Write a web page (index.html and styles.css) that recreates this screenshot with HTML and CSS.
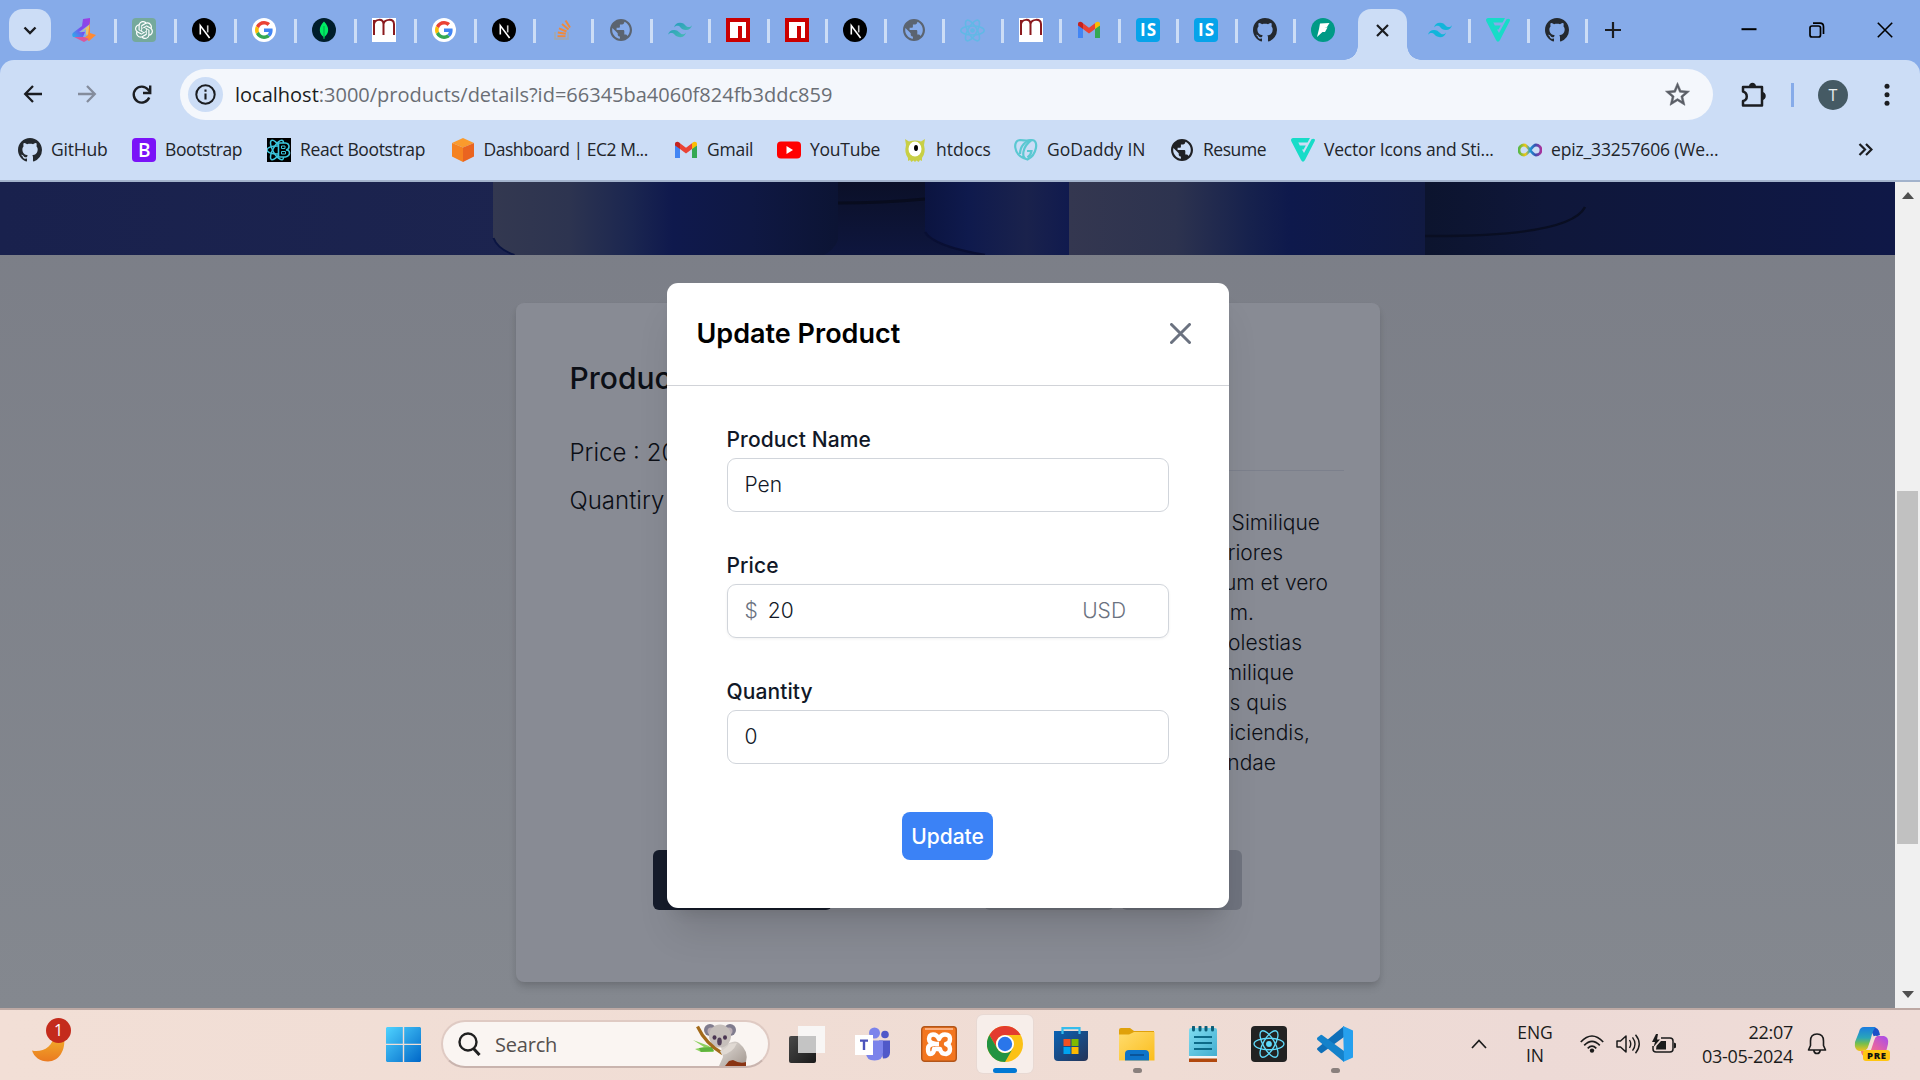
FILE: index.html
```html
<!DOCTYPE html>
<html lang="en">
<head>
<meta charset="utf-8">
<title>Update Product</title>
<link rel="stylesheet" href="styles.css">
</head>
<body>
<svg class="defs" width="0" height="0" aria-hidden="true">
  <defs>
    <linearGradient id="gWin" x1="0" y1="0" x2="1" y2="1"><stop offset="0" stop-color="#4fd3ff"/><stop offset="1" stop-color="#0067c8"/></linearGradient>
    <linearGradient id="gMoon" x1="0" y1="0" x2="0" y2="1"><stop offset="0" stop-color="#f3b52c"/><stop offset="1" stop-color="#ea7a20"/></linearGradient>
    <linearGradient id="gStore" x1="0" y1="0" x2="1" y2="1"><stop offset="0" stop-color="#0a62b4"/><stop offset="1" stop-color="#263457"/></linearGradient>
    <linearGradient id="gFolder" x1="0" y1="0" x2="1" y2="1"><stop offset="0" stop-color="#ffdc6e"/><stop offset="1" stop-color="#fbbd1c"/></linearGradient>
    <linearGradient id="gNote" x1="0" y1="0" x2="1" y2="1"><stop offset="0" stop-color="#7fdcf0"/><stop offset="1" stop-color="#43aed0"/></linearGradient>
    <linearGradient id="gTri" x1="0" y1="1" x2="1" y2="0"><stop offset="0" stop-color="#25b4ea"/><stop offset=".45" stop-color="#7a4cf0"/><stop offset="1" stop-color="#a03fe0"/></linearGradient>
    <linearGradient id="gTw" x1="0" y1="0" x2="1" y2="1"><stop offset="0" stop-color="#2298bd"/><stop offset="1" stop-color="#4cc0b4"/></linearGradient>
    <linearGradient id="gCopA" x1="0" y1="0" x2="0" y2="1"><stop offset="0" stop-color="#1a7be0"/><stop offset=".45" stop-color="#2aa6b8"/><stop offset=".7" stop-color="#79bf4a"/><stop offset="1" stop-color="#f6c21c"/></linearGradient>
    <linearGradient id="gCopB" x1="1" y1="0" x2="0" y2="1"><stop offset="0" stop-color="#a44af0"/><stop offset=".5" stop-color="#e562a4"/><stop offset="1" stop-color="#ff8a5c"/></linearGradient>
    <linearGradient id="gKoala" x1="0" y1="0" x2="1" y2="1"><stop offset="0" stop-color="#e4dfdb"/><stop offset="1" stop-color="#a2978f"/></linearGradient>
    <linearGradient id="gInf" x1="0" y1="0" x2="1" y2="0"><stop offset="0" stop-color="#58b947"/><stop offset=".3" stop-color="#f3c613"/><stop offset=".5" stop-color="#1b9ad6"/><stop offset=".75" stop-color="#3a4fb0"/><stop offset="1" stop-color="#a8329b"/></linearGradient>
    <linearGradient id="gDark" x1="0" y1="0" x2="1" y2="1"><stop offset="0" stop-color="#4a4a4a"/><stop offset="1" stop-color="#1a1a1a"/></linearGradient>
    <symbol id="github" viewBox="0 0 16 16"><path fill="#24292f" d="M8 0C3.58 0 0 3.58 0 8c0 3.54 2.29 6.53 5.47 7.59.4.07.55-.17.55-.38 0-.19-.01-.82-.01-1.49-2.01.37-2.53-.49-2.69-.94-.09-.23-.48-.94-.82-1.13-.28-.15-.68-.52-.01-.53.63-.01 1.08.58 1.23.82.72 1.21 1.87.87 2.33.66.07-.52.28-.87.51-1.07-1.78-.2-3.64-.89-3.64-3.95 0-.87.31-1.59.82-2.15-.08-.2-.36-1.02.08-2.12 0 0 .67-.21 2.2.82.64-.18 1.32-.27 2-.27.68 0 1.36.09 2 .27 1.53-1.04 2.2-.82 2.2-.82.44 1.1.16 1.92.08 2.12.51.56.82 1.27.82 2.15 0 3.07-1.87 3.75-3.65 3.95.29.25.54.73.54 1.48 0 1.07-.01 1.93-.01 2.2 0 .21.15.46.55.38A8.013 8.013 0 0016 8c0-4.42-3.58-8-8-8z"/></symbol>
    <symbol id="next" viewBox="0 0 24 24"><circle cx="12" cy="12" r="12"/><path d="M8.3 16.6V7.6L17.6 20" fill="none" stroke="#fff" stroke-width="1.6"/><path d="M15.7 7.4v7" stroke="#ccc" stroke-width="1.6"/></symbol>
    <symbol id="google" viewBox="0 0 24 24"><circle cx="12" cy="12" r="12" fill="#fff"/><g transform="translate(3 3) scale(.375)"><path fill="#EA4335" d="M24 9.5c3.54 0 6.71 1.22 9.21 3.6l6.85-6.85C35.9 2.38 30.47 0 24 0 14.62 0 6.51 5.38 2.56 13.22l7.98 6.19C12.43 13.72 17.74 9.5 24 9.5z"/><path fill="#4285F4" d="M46.98 24.55c0-1.57-.15-3.09-.38-4.55H24v9.02h12.94c-.58 2.96-2.26 5.48-4.78 7.18l7.73 6c4.51-4.18 7.09-10.36 7.09-17.65z"/><path fill="#FBBC05" d="M10.53 28.59c-.48-1.45-.76-2.99-.76-4.59s.27-3.14.76-4.59l-7.98-6.19C.92 16.46 0 20.12 0 24c0 3.88.92 7.54 2.56 10.78l7.97-6.19z"/><path fill="#34A853" d="M24 48c6.48 0 11.93-2.13 15.89-5.81l-7.73-6c-2.15 1.45-4.92 2.3-8.16 2.3-6.26 0-11.57-4.22-13.47-9.91l-7.98 6.19C6.51 42.62 14.62 48 24 48z"/></g></symbol>
    <symbol id="emm" viewBox="0 0 24 24"><path fill="#fff" d="M0 0h24v24H0z"/><path d="M2 17V2M2 6C3 1 11 0 11.500 6V17M11.500 6C12.500 1 21.500 0 22 6V17" fill="none" stroke="#8b1a1e" stroke-width="2"/></symbol>
    <symbol id="globe" viewBox="2 2 20 20"><path d="M12 2C6.480 2 2 6.480 2 12s4.480 10 10 10 10-4.480 10-10S17.520 2 12 2zm-1 17.930c-3.950-.49-7-3.850-7-7.930 0-.62.08-1.210.21-1.790L9 15v1c0 1.100.9 2 2 2v1.930zm6.900-2.540c-.26-.81-1-1.390-1.900-1.390h-1v-3c0-.55-.45-1-1-1H8v-2h2c.55 0 1-.45 1-1V7h2c1.100 0 2-.9 2-2v-.41c2.930 1.190 5 4.060 5 7.410 0 2.080-.8 3.970-2.100 5.390z"/></symbol>
    <symbol id="tailwind" viewBox="0 0 24 24"><path d="M12.001 4.800c-3.200 0-5.200 1.600-6 4.800 1.200-1.600 2.600-2.200 4.200-1.800.913.228 1.565.89 2.288 1.624C13.666 10.618 15.027 12 18.001 12c3.200 0 5.200-1.600 6-4.800-1.200 1.600-2.600 2.200-4.200 1.800-.913-.228-1.565-.89-2.288-1.624C16.337 6.182 14.976 4.800 12.001 4.800zM6.001 12c-3.200 0-5.200 1.600-6 4.800 1.200-1.600 2.600-2.200 4.200-1.800.913.228 1.565.89 2.288 1.624 1.177 1.194 2.538 2.576 5.512 2.576 3.200 0 5.200-1.600 6-4.800-1.200 1.600-2.600 2.200-4.200 1.800-.913-.228-1.565-.89-2.288-1.624C10.337 13.382 8.976 12 6.001 12z"/></symbol>
    <symbol id="npm" viewBox="0 0 24 24"><path fill="#cb0000" d="M0 0h24v24H0z"/><path fill="#fff" d="M4 4h16v16h-4V8h-4v12H4z"/></symbol>
    <symbol id="reactmark" viewBox="0 0 24 24"><g fill="none" stroke="currentColor"><ellipse cx="12" cy="12" rx="11.200" ry="4.300"/><ellipse cx="12" cy="12" rx="11.200" ry="4.300" transform="rotate(60 12 12)"/><ellipse cx="12" cy="12" rx="11.200" ry="4.300" transform="rotate(120 12 12)"/></g><circle cx="12" cy="12" r="2.200" fill="currentColor"/></symbol>
    <symbol id="gmail" viewBox="0 0 24 24"><path fill="#4285f4" d="M1 20V7l5 3.500V20z"/><path fill="#34a853" d="M18 20V10.500L23 7v13z"/><path fill="#ea4335" d="M6 11V5.200l6 4.600 6-4.600V11l-6 4.500z"/><path fill="#c5221f" d="M1 7.500V6c0-2.600 2.900-3 4.300-1.400L6 5.200V11z"/><path fill="#fbbc04" d="M23 7.500V6c0-2.600-2.900-3-4.300-1.400l-.7.600V11z"/></symbol>
    <symbol id="is" viewBox="0 0 24 24"><rect width="24" height="24" rx="4" fill="#06a3ea"/><text x="12" y="18" text-anchor="middle" font-family="Open Sans,sans-serif" font-weight="700" font-size="17" fill="#fff" textLength="16">IS</text></symbol>
    <symbol id="flaticon" viewBox="0 0 24 24"><path fill="#17dcc8" d="M1.800 0H19L16.500 4.500H7.300L8.800 7.500H14.800L12.600 11.500H11L13 15 20.500 1.200Q22.500 0 24 1.500 24 2.500 23.500 3.500L14 22Q12 25.500 10 22L.3 3.200Q-.7 .5 1.800 0z"/></symbol>
  </defs>
</svg>

<header class="browser">
  <div class="tabstrip">
    <button class="tab-search" aria-label="Search tabs"><svg width="14" height="9" viewBox="0 0 14 9"><path d="M1.500 1.500 7 7l5.500-5.500" fill="none" stroke="#1b1d21" stroke-width="2.400"/></svg></button>
    <div class="tabs">
      <div class="tab wide"><svg width="24" height="24" viewBox="0 0 24 24"><path fill="url(#gTri)" d="M11 1 18 0V6L7 14h6l-2 5H1q-2-3 1-5l8-6z"/><path fill="#e9c46a" d="M17 7v9l-3 1v-6l-6 4z"/><path fill="#ff8a32" d="M18 3v12l6 2-7 6-5-3 4-3z"/><path fill="#d9579f" d="M2 19l10 0 5 2-5 3z"/></svg></div>
      <div class="tab wide"><svg width="24" height="24" viewBox="0 0 24 24"><rect width="24" height="24" rx="4" fill="#75a99c"/><path transform="translate(3 3) scale(.75)" fill="#fff" d="M22.282 9.821a5.985 5.985 0 0 0-.516-4.911 6.046 6.046 0 0 0-6.510-2.900A6.065 6.065 0 0 0 4.981 4.182a5.985 5.985 0 0 0-3.998 2.900 6.046 6.046 0 0 0 .743 7.097 5.980 5.980 0 0 0 .511 4.911 6.051 6.051 0 0 0 6.515 2.900A5.985 5.985 0 0 0 13.260 24a6.056 6.056 0 0 0 5.772-4.206 5.989 5.989 0 0 0 3.998-2.900 6.056 6.056 0 0 0-.748-7.073zm-9.022 12.608a4.476 4.476 0 0 1-2.876-1.041l.142-.080 4.778-2.758a.795.795 0 0 0 .393-.681v-6.737l2.020 1.169a.071.071 0 0 1 .038.052v5.583a4.504 4.504 0 0 1-4.495 4.494zm-9.661-4.125a4.471 4.471 0 0 1-.535-3.014l.142.085 4.783 2.758a.771.771 0 0 0 .781 0l5.843-3.369v2.332a.080.080 0 0 1-.033.062L9.740 19.950a4.499 4.499 0 0 1-6.141-1.646zM2.341 7.896a4.485 4.485 0 0 1 2.366-1.973V11.600a.766.766 0 0 0 .388.677l5.814 3.354-2.020 1.169a.076.076 0 0 1-.071 0l-4.830-2.787A4.504 4.504 0 0 1 2.341 7.872zm16.596 3.856L13.104 8.364 15.119 7.200a.076.076 0 0 1 .071 0l4.830 2.791a4.494 4.494 0 0 1-.677 8.104v-5.677a.790.790 0 0 0-.407-.667zm2.011-3.023l-.142-.085-4.774-2.782a.776.776 0 0 0-.785 0L9.409 9.230V6.897a.066.066 0 0 1 .028-.062l4.830-2.787a4.499 4.499 0 0 1 6.680 4.660zM8.307 12.863l-2.020-1.164a.080.080 0 0 1-.038-.057V6.074a4.499 4.499 0 0 1 7.376-3.454l-.142.081L8.704 5.459a.795.795 0 0 0-.393.681zm1.098-2.365l2.602-1.500 2.607 1.500v2.999l-2.597 1.500-2.607-1.500z"/></svg></div>
      <div class="tab wide"><svg width="24" height="24"><use href="#next"/></svg></div>
      <div class="tab wide"><svg width="24" height="24"><use href="#google"/></svg></div>
      <div class="tab wide"><svg width="24" height="24" viewBox="0 0 24 24"><circle cx="12" cy="12" r="12" fill="#001e2b"/><path fill="#00ed64" d="M12 3.500c6 6 5 12 .4 15.500V21h-.8v-2C7 15.500 6 9.500 12 3.500z"/><path d="M12 8v12" stroke="#00a54a"/></svg></div>
      <div class="tab wide"><svg width="24" height="24"><use href="#emm"/></svg></div>
      <div class="tab wide"><svg width="24" height="24"><use href="#google"/></svg></div>
      <div class="tab"><svg width="24" height="24"><use href="#next"/></svg></div>
      <div class="tab"><svg width="20" height="22" viewBox="0 0 20 22"><path d="M2 13v7h13v-7" fill="none" stroke="#a3a8ad" stroke-width="1.600"/><path d="M4.500 17.300h8M4.800 13.500l8 1.200M6 9.300l7.500 3.200M9 5l6.500 5.500M12.500 1.500l4.500 7" stroke="#ef8a3c" stroke-width="2"/></svg></div>
      <div class="tab"><svg class="globe-grey" width="22" height="22"><use href="#globe"/></svg></div>
      <div class="tab"><svg width="24" height="24" fill="url(#gTw)"><use href="#tailwind"/></svg></div>
      <div class="tab"><svg width="24" height="24"><use href="#npm"/></svg></div>
      <div class="tab"><svg width="24" height="24"><use href="#npm"/></svg></div>
      <div class="tab"><svg width="24" height="24"><use href="#next"/></svg></div>
      <div class="tab"><svg class="globe-grey" width="22" height="22"><use href="#globe"/></svg></div>
      <div class="tab"><svg class="react-soft" width="25" height="25"><use href="#reactmark"/></svg></div>
      <div class="tab"><svg width="24" height="24"><use href="#emm"/></svg></div>
      <div class="tab"><svg width="24" height="24"><use href="#gmail"/></svg></div>
      <div class="tab"><svg width="24" height="24"><use href="#is"/></svg></div>
      <div class="tab"><svg width="24" height="24"><use href="#is"/></svg></div>
      <div class="tab"><svg width="24" height="24"><use href="#github"/></svg></div>
      <div class="tab plain"><svg width="24" height="24" viewBox="0 0 24 24"><circle cx="12" cy="12" r="12" fill="#009a86"/><path fill="#fff" d="M9 5.500 18.500 5 16 9h-2.500l3 .5-2.500 4.500h-2.500L6 19l2-8z"/></svg></div>
      <div class="tab active"><svg width="13" height="13" viewBox="0 0 13 13"><path d="M1 1l11 11M12 1 1 12" stroke="#1b1d21" stroke-width="2.200"/></svg></div>
      <div class="tab"><svg width="24" height="24" fill="#12b5da"><use href="#tailwind"/></svg></div>
      <div class="tab"><svg width="24" height="24"><use href="#flaticon"/></svg></div>
      <div class="tab"><svg width="24" height="24"><use href="#github"/></svg></div>
    </div>
    <button class="new-tab" aria-label="New tab"><svg width="16" height="16" viewBox="0 0 16 16"><path d="M8 0v16M0 8h16" stroke="#1b1d21" stroke-width="2.200"/></svg></button>
    <div class="window-controls">
      <svg width="16" height="16" viewBox="0 0 16 16"><path d="M.5 7.200h15" stroke="#000" stroke-width="2"/></svg>
      <svg width="16" height="16" viewBox="0 0 16 16"><rect x="1" y="4" width="10.500" height="11" rx="2" fill="none" stroke="#000" stroke-width="1.700"/><path d="M4 1.200h7q3.500 0 3.500 3.500V12" fill="none" stroke="#000" stroke-width="1.700"/></svg>
      <svg width="16" height="16" viewBox="0 0 16 16"><path d="M.8.8l14.400 14.400M15.200.8.8 15.200" stroke="#000" stroke-width="1.600"/></svg>
    </div>
  </div>

  <div class="toolbar">
    <div class="nav">
      <svg width="20" height="20" viewBox="0 0 20 20"><path d="M19 10H2.500M10 2 2.200 10 10 18" fill="none" stroke="#1b1d21" stroke-width="2.300"/></svg>
      <svg width="20" height="20" viewBox="0 0 20 20"><path d="M1 10h16.500M10 2l7.800 8L10 18" fill="none" stroke="#848c9c" stroke-width="2.300"/></svg>
      <svg width="22" height="22" viewBox="0 0 22 22"><path d="M18.200 13.500A8 8 0 1 1 17 5.600L19 8" fill="none" stroke="#1b1d21" stroke-width="2.400"/><path d="M19.200 1.500V9H12" fill="none" stroke="#1b1d21" stroke-width="2.400"/></svg>
    </div>
    <div class="omnibox">
      <span class="site-info"><svg width="21" height="21" viewBox="0 0 21 21"><circle cx="10.500" cy="10.500" r="9.200" fill="none" stroke="#1b1d21" stroke-width="2"/><path d="M10.500 9.500v6M10.500 5.500v2.200" stroke="#1b1d21" stroke-width="2.100"/></svg></span>
      <span class="url"><b>localhost</b>:3000/products/details?id=66345ba4060f824fb3ddc859</span>
      <svg class="star" width="29" height="29" viewBox="0 0 24 24"><path fill="#5a5e66" stroke="#5a5e66" stroke-width=".4" d="M22 9.240l-7.190-.62L12 2 9.190 8.630 2 9.240l5.460 4.730L5.820 21 12 17.270 18.180 21l-1.630-7.030L22 9.240zM12 15.400l-3.760 2.270 1-4.280-3.320-2.880 4.380-.38L12 6.100l1.710 4.040 4.380.38-3.320 2.880 1 4.280L12 15.400z"/></svg>
    </div>
    <div class="actions">
      <svg width="26" height="26" viewBox="0 0 26 26"><path d="M3 5h19v18.500H3V19c5-1 5-8 0-9.500z" fill="none" stroke="#1b1d21" stroke-width="2.500" stroke-linejoin="round"/><path fill="#1b1d21" d="M9 4.500c0-5 7-5 7 0zM22 10c5 0 5 8 0 8z"/></svg>
      <i class="divider"></i>
      <span class="avatar">T</span>
      <svg class="kebab" width="6" height="24" viewBox="0 0 6 24"><g fill="#1b1d21"><circle cx="3" cy="3.200" r="2.500"/><circle cx="3" cy="11.700" r="2.500"/><circle cx="3" cy="20.200" r="2.500"/></g></svg>
    </div>
  </div>

  <nav class="bookmarks">
    <a class="bm b1"><svg width="24" height="24"><use href="#github"/></svg><span>GitHub</span></a>
    <a class="bm b2"><svg width="24" height="24" viewBox="0 0 24 24"><rect width="24" height="24" rx="4" fill="#7a12f8"/><text x="12" y="18.500" text-anchor="middle" font-family="Open Sans,sans-serif" font-weight="600" font-size="19" fill="#fff">B</text></svg><span>Bootstrap</span></a>
    <a class="bm b3"><svg width="24" height="24" viewBox="0 0 24 24"><path d="M0 0h24v24H0z"/><g fill="none" stroke="#3cc6dc" stroke-width="1.500"><ellipse cx="10" cy="12" rx="10" ry="4"/><ellipse cx="10" cy="12" rx="11" ry="4" transform="rotate(60 10 12)"/><ellipse cx="10" cy="12" rx="11" ry="4" transform="rotate(120 10 12)"/></g><path d="M11.500 5v14h7q4-1 4-4t-3.500-3q3-.5 3-3.500T18.500 5z" fill="#000" stroke="#3cc6dc" stroke-width="1.600"/><path d="M14.500 8h3.500v2.500h-3.500zM14.500 13.500h4V16h-4z" fill="none" stroke="#3cc6dc"/></svg><span>React Bootstrap</span></a>
    <a class="bm b4"><svg width="24" height="24" viewBox="0 0 24 24"><path fill="#fa9a2c" d="M12 0 23 5 12 9.500 1 5z"/><path fill="#f58220" d="M1 5l11 4.500V24L1 18.500z"/><path fill="#ea6420" d="M23 5 12 9.500V24l11-5.500z"/></svg><span>Dashboard | EC2 M...</span></a>
    <a class="bm b5"><svg width="24" height="24"><use href="#gmail"/></svg><span>Gmail</span></a>
    <a class="bm b6"><svg width="24" height="24" viewBox="0 0 24 24"><rect y="3.500" width="24" height="17" rx="4" fill="#f00"/><path fill="#fff" d="M9.500 8v8l6.500-4z"/></svg><span>YouTube</span></a>
    <a class="bm b7"><svg width="24" height="24" viewBox="0 0 24 24"><path fill="#c8cf45" d="M2 1l4 2.500q6-2 12 0L22 1l-1 6q2 8-2 13v3l-2-1-1.500 2-2-1.500L12 24l-1.500-1.500-2 1.500L7 22l-2 1v-3Q1 15 3 7z"/><ellipse cx="12" cy="11" rx="6.500" ry="7.500" fill="#fff"/><ellipse cx="13" cy="10" rx="2" ry="3"/></svg><span>htdocs</span></a>
    <a class="bm b8"><svg width="24" height="24" viewBox="0 0 24 24"><g fill="none" stroke="#5bc8d2" stroke-width="2.200"><path d="M10.500 20.500C-1 16-1 2 6 2q7 1 12 0c7 0 5 15-4.500 19.500-7-1.500-5-13 4-19.500"/><path d="M6 16C6 8 12 2 18 2M13 13h4.500q-.5 4-4 6.500"/></g></svg><span>GoDaddy IN</span></a>
    <a class="bm b9"><svg width="22" height="22" fill="#202124"><use href="#globe"/></svg><span>Resume</span></a>
    <a class="bm b10"><svg width="24" height="24"><use href="#flaticon"/></svg><span>Vector Icons and Sti...</span></a>
    <a class="bm b11"><svg width="24" height="24" viewBox="0 0 24 24"><path d="M12 12C9 8 8 7 6 7a4.800 4.800 0 0 0 0 10c2 0 3-1 6-5s4-5 6-5a4.800 4.800 0 0 1 0 10c-2 0-3-1-6-5z" fill="none" stroke="url(#gInf)" stroke-width="2.800"/></svg><span>epiz_33257606 (We...</span></a>
    <svg class="more" width="15" height="13" viewBox="0 0 15 13"><path d="M1.500 1 7 6.500 1.500 12M8 1l5.500 5.500L8 12" fill="none" stroke="#1b1d21" stroke-width="2.200"/></svg>
  </nav>
</header>

<div class="viewport">
  <main class="page">
    <div class="hero">
      <svg width="1895" height="73" viewBox="0 0 1895 73">
        <defs>
          <linearGradient id="h0"><stop offset="0" stop-color="#19214d"/><stop offset="1" stop-color="#1c244f"/></linearGradient>
          <linearGradient id="h1"><stop offset="0" stop-color="#333850"/><stop offset=".22" stop-color="#2d3450"/><stop offset=".4" stop-color="#1b2650"/><stop offset=".52" stop-color="#0f194d"/><stop offset=".75" stop-color="#0f1843"/><stop offset="1" stop-color="#0c1434"/></linearGradient>
          <linearGradient id="h2"><stop offset="0" stop-color="#0b1440"/><stop offset=".3" stop-color="#0f1a4d"/><stop offset=".7" stop-color="#1a224c"/><stop offset="1" stop-color="#101a4e"/></linearGradient>
          <linearGradient id="h3"><stop offset="0" stop-color="#343750"/><stop offset=".3" stop-color="#2d334f"/><stop offset=".5" stop-color="#17224d"/><stop offset=".62" stop-color="#0e194c"/><stop offset="1" stop-color="#111a42"/></linearGradient>
          <linearGradient id="h4"><stop offset="0" stop-color="#0c142e"/><stop offset=".25" stop-color="#0f173a"/><stop offset="1" stop-color="#0f1847"/></linearGradient>
          <linearGradient id="h5" x1="0" y1="0" x2="0" y2="1"><stop offset="0" stop-color="#0b1028"/><stop offset="1" stop-color="#0e163e"/></linearGradient>
        </defs>
        <path fill="url(#h0)" d="M0 0h530v73H0z"/>
        <path fill="url(#h5)" d="M800 0h200v73H800z"/>
        <path d="M838 21q45 0 87-4" fill="none" stroke="#080c1e" stroke-width="3"/>
        <path fill="url(#h1)" d="M493 0h345v58q-4 10-14 15H515Q497 67 493 56z"/>
        <path d="M493.500 56q4 11 21 17" fill="none" stroke="#0b1542" stroke-width="2"/>
        <path fill="url(#h2)" d="M925 0h145v73h-85Q935 65 925 52z"/>
        <path d="M925 50q8 14 60 23" fill="none" stroke="#090f33" stroke-width="2.500"/>
        <path fill="url(#h3)" d="M1069 0h357v73h-357z"/>
        <path fill="url(#h4)" d="M1425 0h470v73h-470z"/>
        <path d="M1425 54q145 1 160-29" fill="none" stroke="#090e22" stroke-width="2.500"/>
      </svg>
    </div>
    <section class="card">
      <div class="summary">
        <h1>Product</h1>
        <p>Price : 20</p>
        <p>Quantiry</p>
      </div>
      <div class="details">
        <hr>
        <div class="description">
          <span>Similique</span><span>asperiores</span><span>harum et vero</span><span>enim.</span><span>molestias</span><span>similique</span><span>facilis quis</span><span>reiciendis,</span><span>repellendae</span>
        </div>
      </div>
      <div class="buttons"><i class="btn dark"></i><i class="btn soft first"></i><i class="btn grey"></i></div>
    </section>
  </main>
  <div class="scrollbar">
    <svg width="12" height="8" viewBox="0 0 12 8"><path fill="#505050" d="M0 8h12L6 1z"/></svg>
    <i class="thumb"></i>
    <svg width="12" height="8" viewBox="0 0 12 8"><path fill="#505050" d="M0 0h12L6 7z"/></svg>
  </div>
  <div class="modal">
    <div class="modal-head">
      <h2>Update Product</h2>
      <svg width="21" height="21" viewBox="0 0 21 21"><path d="M1.500 1.500l18 18M19.500 1.500l-18 18" stroke="#6b7280" stroke-width="3" stroke-linecap="round"/></svg>
    </div>
    <div class="modal-body">
      <label>Product Name</label>
      <div class="field">Pen</div>
      <label>Price</label>
      <div class="field shadow"><em>$</em>20<em class="unit">USD</em></div>
      <label>Quantity</label>
      <div class="field">0</div>
      <button class="update">Update</button>
    </div>
  </div>
</div>

<footer class="taskbar">
  <div class="weather">
    <svg width="36" height="38" viewBox="0 0 36 38"><path fill="url(#gMoon)" d="M1 25.500c9 2.500 22-3 22-17L33 12c2 13-5 24.500-16 24.500C9 36.500 3 32 1 25.500z"/></svg>
    <span class="badge">1</span>
  </div>
  <svg class="start" width="35" height="35" viewBox="0 0 35 35"><path fill="url(#gWin)" d="M1 0h15.800v16.700H0V1zM18.200 0H34l1 1v15.700H18.200zM0 18.100h16.800V35H1l-1-1zM18.200 18.100H35V34l-1 1H18.200z"/></svg>
  <div class="search">
    <svg width="23" height="24" viewBox="0 0 23 24"><circle cx="10" cy="10" r="8.500" fill="none" stroke="#1f1f1f" stroke-width="2.400"/><path d="M15.500 16.500l6 6.500" stroke="#1f1f1f" stroke-width="3"/></svg>
    <span>Search</span>
    <svg class="koala" width="56" height="43" viewBox="0 0 56 43"><path fill="#8ed160" d="M0 17l16 6 5 6-13 0-6-3 9-2z"/><path fill="#5eb33f" d="M6 25l13-1 2 4-13 1z"/><path fill="#8a3413" d="M28 43q5-8 14-7l11 1v6z"/><path fill="url(#gKoala)" d="M28 24q4-3 8-4 7-3 10 0 10 8 7 19-6 2-13-2l-4 1-4 5h-6l4-9z"/><circle cx="17" cy="7" r="6" fill="#807c8e"/><circle cx="37" cy="7" r="6" fill="#807c8e"/><circle cx="18" cy="8" r="3.500" fill="#bbaeb6"/><circle cx="36" cy="8" r="3.500" fill="#bbaeb6"/><ellipse cx="27" cy="13" rx="11" ry="11.500" fill="#c6bfbb"/><ellipse cx="21.500" cy="14.500" rx="2" ry="2.300" fill="#4b3652"/><ellipse cx="32" cy="14.500" rx="2" ry="2.300" fill="#4b3652"/><ellipse cx="26.500" cy="18.500" rx="2.300" ry="4" fill="#53405a"/><path d="M4.500 3.500q8 17 25 27" fill="none" stroke="#a36a1b" stroke-width="3.200"/><path fill="#e0d9d3" d="M44 20q-4 10-15 12l-2-4q7-3 9-7z"/></svg>
  </div>
  <div class="pinned">
    <span class="pin"><svg width="36" height="40" viewBox="0 0 36 40"><rect y="12" width="27" height="27" rx="2" fill="url(#gDark)"/><path fill="#f8f8f8" d="M9 2h27v27H9z" opacity=".9"/><path fill="#c4c4c4" d="M9 12h18v17H9z"/></svg></span>
    <span class="pin"><svg width="36" height="34" viewBox="0 0 36 34"><circle cx="19.500" cy="6" r="5.500" fill="#7b83eb"/><circle cx="30" cy="7.500" r="3.800" fill="#5059c9"/><path fill="#5059c9" d="M24 13.500h11v12q0 6-7 6z"/><path fill="#7b83eb" d="M11 13.500h17v12q0 8-8.500 8T11 25.500z"/><path fill="#fff" d="M0 8h18v20H0z"/><path fill="#4b53bc" d="M5 12.500h8v2.300H10.200V23H7.800v-8.200H5z"/></svg></span>
    <span class="pin"><svg width="36" height="36" viewBox="0 0 36 36"><rect x=".7" y=".7" width="34.600" height="34.600" rx="3" fill="#f3761f" stroke="#b3561a" stroke-width="1.400"/><path fill="#fcae7c" d="M4 2h28v2H4z"/><path d="M18 18h-3q-7-1-7-5 0-4.500 4-4.500t6 4.500q2-4.500 6-4.500 5 0 5 4.500t-4 5q4 1 4 5t-4 5q-5 0-6-5h-6q0 5-4 5-2 0-2-5 0-5 6-5" fill="none" stroke="#fff" stroke-width="4.400" stroke-linejoin="round"/></svg></span>
    <span class="pin current"><svg width="36" height="36" viewBox="0 0 36 36"><circle cx="18" cy="18" r="18" fill="#fbc116"/><path fill="#e33b2e" d="M2.400 9A18 18 0 0 1 33.600 9H18a9 9 0 0 0-7.800 13.500z"/><path fill="#229342" d="M2.400 9A18 18 0 0 0 18 36l7.800-13.500a9 9 0 0 1-15.600 0z"/><circle cx="18" cy="18" r="9" fill="#fff"/><circle cx="18" cy="18" r="7.200" fill="#2a76ea"/></svg></span>
    <span class="pin"><svg width="36" height="36" viewBox="0 0 36 36"><path d="M9.500 8V2.200h17V8" fill="none" stroke="#35bcec" stroke-width="2.200"/><path fill="url(#gStore)" d="M1 5h34v26q0 4-4 4H5q-4 0-4-4z"/><path d="M9.500 5v3M26.500 5v3" stroke="#35bcec" stroke-width="2.200"/><path fill="#f25022" d="M10.500 13h7v7h-7z"/><path fill="#7fba00" d="M18.500 13h7v7h-7z"/><path fill="#00a4ef" d="M10.500 21h7v7h-7z"/><path fill="#ffb900" d="M18.500 21h7v7h-7z"/></svg></span>
    <span class="pin open"><svg width="36" height="36" viewBox="0 0 36 36"><path fill="#e0a10a" d="M0 4q0-2 2-2h9l4 3h20v5H0z"/><path fill="url(#gFolder)" d="M0 8.500h10L15 6h20.500v28.500H0z"/><path fill="#0e74c9" d="M6 34.500V28q0-4 4-4h16q4 0 4 4v6.500z"/><path d="M11 29h14" stroke="#0a4a8a" stroke-width="1.500"/></svg></span>
    <span class="pin"><svg width="28" height="36" viewBox="0 0 28 36"><path fill="#b1480d" d="M0 32h28v4H0z"/><path fill="#f4f4f4" d="M0 29h28v3.500H0z"/><path fill="url(#gNote)" d="M0 4q0-2 2-2h24q2 0 2 2v26H0z"/><path d="M4.500 1v3M11 1v3M17 1v3M23.500 1v3" stroke="#0c5e78" stroke-width="3" stroke-linecap="round"/><path d="M5 11h18M5 17h18M5 23h18" stroke="#0c6a88" stroke-width="2"/></svg></span>
    <span class="pin"><span class="react-tile"><svg width="32" height="32"><use href="#reactmark"/></svg></span></span>
    <span class="pin open"><svg width="36" height="36" viewBox="0 0 36 36"><path fill="#0f6fb8" d="M27 0v11L5 27l-1 .3L.5 24q-1-1 0-2z"/><path fill="#1482cb" d="M.5 11.500Q-.5 12.500.5 14L27 36V25L5 9l-1-.3z"/><path fill="#26a0ee" d="M26 0l10 4.500v27L26 36l1-2z"/></svg></span>
  </div>
  <div class="tray">
    <svg class="chev" width="16" height="10" viewBox="0 0 16 10"><path d="M1 9l7-7.500L15 9" fill="none" stroke="#1b1b1b" stroke-width="1.700"/></svg>
    <div class="lang">ENG<br>IN</div>
    <svg width="24" height="18" viewBox="0 0 24 18"><g fill="none" stroke="#1b1b1b" stroke-width="1.700"><path d="M.8 7Q12-5 23.200 7M4.200 10.300q7.800-8 15.600 0M7.700 13.300q4.300-4.300 8.600 0"/></g><circle cx="12" cy="15.600" r="2.200" fill="#1b1b1b"/></svg>
    <svg width="24" height="20" viewBox="0 0 24 20"><path d="M1 7h3.500L10 2v16l-5.500-5H1z" fill="none" stroke="#1b1b1b" stroke-width="1.500" stroke-linejoin="round"/><path d="M13.500 6q2.500 4 0 8M16.500 3.300q5 6.700 0 13.400M19.500.8q7.500 9.200 0 18.400" fill="none" stroke="#1b1b1b" stroke-width="1.400"/></svg>
    <svg width="24" height="20" viewBox="0 0 24 20"><path d="M9 4h9q3 0 3 3v8q0 3-3 3H4q-3 0-3-3v-3" fill="none" stroke="#1b1b1b" stroke-width="1.500"/><path fill="#1b1b1b" d="M22 8.500l2 1v4l-2 1zM4.500 12 9 7h5v8.500H4zM4 0 0 8h3L1.500 13 8 5.500H5L6 0z"/></svg>
    <div class="clock">22:07<br>03-05-2024</div>
    <svg class="bell" width="20" height="22" viewBox="0 0 20 22"><path d="M10 1q6.500 0 6.500 7v4.500l2 4.500h-17l2-4.500V8q0-7 6.500-7zM6.800 17.500q.5 3 3.200 3t3.200-3" fill="none" stroke="#1b1b1b" stroke-width="1.600" stroke-linejoin="round"/></svg>
    <svg width="36" height="36" viewBox="0 0 36 36"><path fill="#1b50c8" d="M16 2h6q3 1 4 7l-6 2z"/><path fill="url(#gCopA)" d="M10 1h12q-3 2-5 11l-3 9q-1 4-6 4H5Q0 24 1 16L5 6Q6 1 10 1z"/><path fill="url(#gCopB)" d="M23 10h7q5 1 4 8l-2 8q-1 5-6 5H12q-5-1-5-6h6q3 0 4-4l3-8q1-3 3-3z"/><path fill="#f4dfd6" d="M18 12q2-3 5-2-2 1-3 5l-3 9h-5q2-1 3-4z"/><rect x="9" y="24" width="27" height="11" rx="3" fill="#ffc610"/><text x="22.500" y="33" text-anchor="middle" font-family="Open Sans,sans-serif" font-weight="800" font-size="9.500" textLength="19" fill="#111">PRE</text></svg>
  </div>
</footer>
</body>
</html>
```
FILE: styles.css
```css
* { box-sizing: border-box; }
body { margin: 0; width: 1920px; height: 1080px; overflow: hidden; display: flex; flex-direction: column; font-family: "Inter", sans-serif; }
button { border: 0; padding: 0; font: inherit; }
svg { display: block; flex: none; }
.defs { position: absolute; }

/* browser chrome */
.browser { height: 182px; background: #86abe9; font-family: "Open Sans", sans-serif; flex: none; }
.tabstrip { height: 60px; display: flex; align-items: center; padding-left: 9px; }
.tab-search { width: 42px; height: 42px; border-radius: 14px; background: #ccddf6; display: grid; place-items: center; margin-right: 6px; }
.tabs { display: flex; height: 60px; }
.tab { width: 58.5px; display: flex; align-items: center; justify-content: center; padding-right: 4px; background: linear-gradient(#ccddf6, #ccddf6) right 0 top 19px / 3px 24px no-repeat; }
.tab.wide { width: 60px; padding-right: 6px; }
.tab.plain { background: none; }
.tab.active { background: #ccddf6; border-radius: 13px 13px 0 0; height: 51px; width: 49px; margin: 9px 6px 0 3px; padding: 0 0 9px; position: relative; }
.tab.active::before, .tab.active::after { content: ""; position: absolute; bottom: 0; width: 14px; height: 14px; }
.tab.active::before { right: 100%; background: radial-gradient(circle at 0 0, transparent 13.5px, #ccddf6 14px); }
.tab.active::after { left: 100%; background: radial-gradient(circle at 100% 0, transparent 13.5px, #ccddf6 14px); }
.globe-grey { fill: #5b6470; }
.react-soft { color: #62b8e6; stroke-width: 1.5; }
.new-tab { background: none; margin-left: 17px; }
.window-controls { display: flex; gap: 52px; margin-left: auto; padding-right: 27px; }
.toolbar { height: 60px; background: #ccddf6; border-radius: 14px 14px 0 0; display: flex; align-items: center; padding: 9px 0 0 23px; }
.nav { display: flex; gap: 34px; width: 157px; }
.omnibox { width: 1533px; height: 51px; border-radius: 26px; background: #f4f7fc; display: flex; align-items: center; padding: 0 21px 0 8px; }
.site-info { width: 35px; height: 35px; border-radius: 50%; background: #ccddf6; display: grid; place-items: center; margin-right: 12px; }
.url { font-size: 20px; color: #6a6e75; flex: 1; white-space: nowrap; }
.url b { font-weight: 400; color: #1b1d21; }
.actions { display: flex; align-items: center; padding-left: 27px; }
.divider { width: 3px; height: 24px; background: #86abe9; margin: 0 24px 0 25px; }
.avatar { width: 30px; height: 30px; border-radius: 50%; background: #455a64; color: #e8eef0; display: grid; place-items: center; font-size: 16px; margin-right: 36px; }
.bookmarks { height: 62px; background: #ccddf6; border-bottom: 2px solid #a3b3cc; display: grid; grid-template-columns: 114px 135px 183.5px 223.5px 103px 126px 111px 156px 121px 227px 340px 1fr; align-items: center; padding: 0 0 1px 18px; }
.bm { display: flex; align-items: center; gap: 9px; font-size: 17.5px; color: #22252a; white-space: nowrap; }
.bm span { margin-top: -1px; }
.b1 { letter-spacing: -.2px; }
.b2 { letter-spacing: -.4px; }
.b3 { letter-spacing: -.35px; }
.b4 { letter-spacing: -.48px; }
.b5, .b6 { letter-spacing: -.25px; }
.b9 { letter-spacing: -.45px; }
.b9 svg { margin: 0 1px; }
.b10 { letter-spacing: -.2px; }
.b11 { letter-spacing: -.15px; }

/* product page */
.viewport { flex: none; height: 826px; display: flex; position: relative; }
.page { width: 1895px; background: linear-gradient(#7b7e87, #84888f); overflow: hidden; }
.hero { height: 73px; }
.card { margin: 48px 0 0 516px; width: 864px; height: 679px; border-radius: 8px; background: #888b94; box-shadow: 0 6px 9px -1px rgba(0,0,0,.12), 0 3px 6px -2px rgba(0,0,0,.1); display: grid; grid-template: 547px 1fr / 1fr 1fr; color: #0c0f16; }
.summary { padding: 53px 0 0 53.5px; }
.summary h1 { margin: 0 0 28px; font-weight: 450; font-size: 30px; line-height: 45px; }
.summary p { margin: 0; font-size: 24px; line-height: 48px; font-weight: 350; }
.details { padding: 167px 36px 0 0; }
.details hr { border: 0; border-top: 1.5px solid #7c808c; margin: 0; }
.description { display: flex; flex-direction: column; margin: 37px 0 0 152px; font-size: 21px; line-height: 30px; text-align: right; font-weight: 350; white-space: nowrap; }
.description span:nth-child(1) { width: 220px; }
.description span:nth-child(2) { width: 183px; }
.description span:nth-child(3) { width: 228px; }
.description span:nth-child(4) { width: 154px; }
.description span:nth-child(5) { width: 202px; }
.description span:nth-child(6) { width: 194px; }
.description span:nth-child(7) { width: 187px; }
.description span:nth-child(8) { width: 210px; }
.description span:nth-child(9) { width: 176px; }
.buttons { grid-column: 1 / 3; display: flex; padding-left: 137px; }
.btn { height: 60px; border-radius: 6px; }
.dark { width: 179px; background: #161c2b; }
.soft { width: 130px; background: #737781; margin: 0 7px 0 152px; }
.grey { width: 121px; background: #6f737e; }
.scrollbar { width: 25px; background: #f0f0f0; display: flex; flex-direction: column; align-items: center; padding: 9px 0; }
.thumb { width: 21px; height: 353px; background: #c1c1c1; margin: 292px 0 auto; }

/* dialog over the page */
.modal { position: absolute; left: 667px; top: 101px; width: 562px; height: 625px; border-radius: 11px; background: #fff; box-shadow: 0 30px 38px -8px rgba(0,0,0,.12), 0 12px 15px -9px rgba(0,0,0,.12); color: #111827; }
.modal-head { height: 103px; border-bottom: 1px solid #d1d3d8; display: flex; align-items: center; justify-content: space-between; padding: 0 38px 1px 29.5px; color: #000; }
.modal-head h2 { margin: 0; font-weight: 600; font-size: 27px; }
.modal-body { padding: 38px 60px 0; display: flex; flex-direction: column; }
.modal-body label { font-size: 21px; line-height: 32px; font-weight: 450; margin: 0 0 2px -.5px; letter-spacing: .1px; }
.field { height: 54px; border: 1.5px solid #d1d5db; border-radius: 9px; padding: 0 42px 1px 16.5px; display: flex; align-items: center; font-size: 21px; font-weight: 350; margin-bottom: 38px; }
.field.shadow { box-shadow: 0 1px 3px rgba(0,0,0,.06); }
.field em { font-style: normal; color: #6b7280; margin-right: 10px; }
.field em.unit { margin: 0 0 0 auto; }
.update { align-self: center; margin: 10px 1px 0 0; width: 91px; height: 48px; border-radius: 8px; background: #3b82f6; color: #fff; font-size: 21px; font-weight: 450; }

/* taskbar */
.taskbar { height: 72px; flex: none; border-top: 2px solid #bda9a4; background: linear-gradient(90deg, #f2dfd6, #efdcd4 60%, #eddad6 80%, #efdcd7); display: flex; align-items: center; padding: 0 0 2px 31px; font-family: "Open Sans", sans-serif; }
.weather { position: relative; width: 355px; }
.badge { position: absolute; left: 15px; top: -7px; width: 25px; height: 25px; border-radius: 50%; background: #c42b1c; color: #fff; font-size: 16px; line-height: 25px; text-align: center; }
.start { margin-right: 20px; }
.search { width: 329px; height: 48px; border-radius: 24px; border: 2px solid #dfcac3; border-bottom-color: #c9b4ae; background: #faf5f2; display: flex; align-items: center; padding: 0 19px 0 15px; font-size: 20px; color: #55504e; }
.search span { margin-left: 14px; flex: 1; letter-spacing: -.2px; }
.pinned { display: flex; margin-left: 4px; }
.pin { width: 66px; height: 68px; display: grid; place-items: center; position: relative; }
.pin.current { width: 56px; height: 58px; margin: 5px; border-radius: 6px; background: #f7eeea; box-shadow: 0 0 0 1px #e8d9d3; }
.pin.current::after, .pin.open::after { content: ""; position: absolute; left: 29px; bottom: 5px; width: 9px; height: 5px; border-radius: 3px; background: #8a807d; }
.pin.current::after { left: 16px; bottom: 0; width: 24px; background: #0078d4; }
.react-tile { width: 36px; height: 36px; border-radius: 4px; background: #222; display: grid; place-items: center; color: #61dafb; }
.tray { margin-left: auto; display: flex; align-items: center; padding-right: 30px; color: #1b1b1b; font-size: 18px; line-height: 24px; gap: 12px; }
.lang { width: 48px; text-align: center; margin: 0 9px 0 12px; font-size: 17.5px; line-height: 23px; }
.clock { text-align: right; width: 105px; letter-spacing: -.3px; }
.bell { margin-right: 15px; margin-left: 2px; }
```
